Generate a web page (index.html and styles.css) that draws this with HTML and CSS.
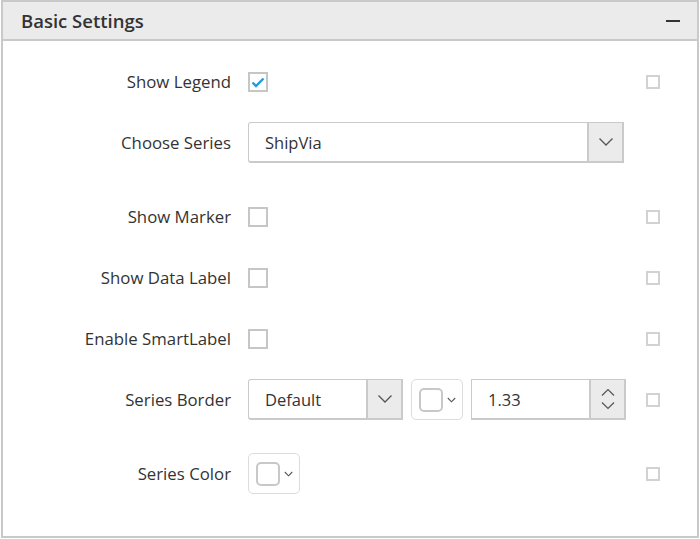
FILE: index.html
```html
<!DOCTYPE html>
<html lang="en">
<head>
<meta charset="utf-8">
<title>Basic Settings</title>
<link rel="stylesheet" href="styles.css">
</head>
<body>
<div class="panel">
  <div class="panel-header">
    <span class="panel-title">Basic Settings</span>
    <span class="collapse-icon"></span>
  </div>
  <div class="panel-body">
    <div class="row">
      <label class="row-label">Show Legend</label>
      <div class="row-control">
        <span class="checkbox checked">
          <svg width="16" height="16" viewBox="0 0 16 16"><polyline points="2.5,8.5 6,12 13.5,4.5" fill="none" stroke="#1f9de3" stroke-width="2.4"/></svg>
        </span>
      </div>
      <span class="side-check"></span>
    </div>

    <div class="row row-tall">
      <label class="row-label">Choose Series</label>
      <div class="row-control">
        <div class="dropdown dropdown-wide">
          <span class="dropdown-text">ShipVia</span>
          <span class="dropdown-btn">
            <svg width="16" height="10" viewBox="0 0 16 10"><polyline points="1.5,1.5 8,8 14.5,1.5" fill="none" stroke="#555" stroke-width="1.3"/></svg>
          </span>
        </div>
      </div>
      <span class="side-check hidden"></span>
    </div>

    <div class="row">
      <label class="row-label">Show Marker</label>
      <div class="row-control"><span class="checkbox"></span></div>
      <span class="side-check"></span>
    </div>

    <div class="row">
      <label class="row-label">Show Data Label</label>
      <div class="row-control"><span class="checkbox"></span></div>
      <span class="side-check"></span>
    </div>

    <div class="row">
      <label class="row-label">Enable SmartLabel</label>
      <div class="row-control"><span class="checkbox"></span></div>
      <span class="side-check"></span>
    </div>

    <div class="row row-tall">
      <label class="row-label">Series Border</label>
      <div class="row-control">
        <div class="dropdown dropdown-small">
          <span class="dropdown-text">Default</span>
          <span class="dropdown-btn">
            <svg width="16" height="10" viewBox="0 0 16 10"><polyline points="1.5,1.5 8,8 14.5,1.5" fill="none" stroke="#555" stroke-width="1.3"/></svg>
          </span>
        </div>
        <div class="color-picker">
          <span class="swatch"></span>
          <svg class="mini-chevron" width="9" height="6" viewBox="0 0 9 6"><polyline points="0.8,1 4.5,4.8 8.2,1" fill="none" stroke="#555" stroke-width="1.1"/></svg>
        </div>
        <div class="numeric">
          <span class="numeric-text">1.33</span>
          <span class="spin">
            <svg width="14" height="8" viewBox="0 0 14 8"><polyline points="1,7.5 7,1.5 13,7.5" fill="none" stroke="#555" stroke-width="1.2"/></svg>
            <svg width="14" height="8" viewBox="0 0 14 8"><polyline points="1,0.5 7,6.5 13,0.5" fill="none" stroke="#555" stroke-width="1.2"/></svg>
          </span>
        </div>
      </div>
      <span class="side-check"></span>
    </div>

    <div class="row">
      <label class="row-label">Series Color</label>
      <div class="row-control">
        <div class="color-picker">
          <span class="swatch"></span>
          <svg class="mini-chevron" width="9" height="6" viewBox="0 0 9 6"><polyline points="0.8,1 4.5,4.8 8.2,1" fill="none" stroke="#555" stroke-width="1.1"/></svg>
        </div>
      </div>
      <span class="side-check"></span>
    </div>
  </div>
</div>
</body>
</html>
```

FILE: styles.css
```css
* { box-sizing: border-box; }

html, body {
  margin: 0;
  padding: 0;
  background: #ffffff;
}

body {
  font-family: "Open Sans", "Noto Sans", "Liberation Sans", sans-serif;
  color: #333333;
}

.panel {
  margin-left: 1px;
  width: 698px;
  height: 538px;
  border: 2px solid #c9c9c9;
  background: #ffffff;
  display: flex;
  flex-direction: column;
}

.panel-header {
  height: 39px;
  flex: none;
  background: #ebebeb;
  border-bottom: 2px solid #c9c9c9;
  display: flex;
  align-items: center;
  justify-content: space-between;
  padding: 0 17px 0 18px;
}

.panel-title {
  font-size: 18.5px;
  font-weight: 600;
  color: #333333;
}

.collapse-icon {
  width: 14px;
  height: 2px;
  background: #333333;
  margin-top: 1px;
}

.panel-body {
  padding: 20px 37px 0 0;
  display: flex;
  flex-direction: column;
  gap: 20px;
}

.row {
  display: grid;
  grid-template-columns: 228px 1fr 14px;
  column-gap: 17px;
  align-items: center;
  height: 41px;
}

.row-tall {
  margin-bottom: 13px;
}

.row-label {
  text-align: right;
  font-size: 16.8px;
  color: #333333;
  white-space: nowrap;
}

.row-control {
  display: flex;
  align-items: center;
  gap: 8px;
}

.checkbox {
  width: 20px;
  height: 20px;
  border: 2px solid #c6c6c6;
  background: #ffffff;
  display: inline-flex;
  align-items: center;
  justify-content: center;
}

.side-check {
  width: 14px;
  height: 14px;
  border: 2px solid #d2d2d2;
}

.side-check.hidden {
  visibility: hidden;
}

.dropdown {
  height: 41px;
  border: 2px solid #cacaca;
  border-top-width: 1px;
  border-left-width: 1px;
  border-radius: 3px 0 0 3px;
  display: flex;
  align-items: stretch;
  background: #ffffff;
}

.dropdown-wide { width: 376px; }
.dropdown-small { width: 155px; }

.dropdown-text {
  flex: 1;
  display: flex;
  align-items: center;
  padding-left: 16px;
  font-size: 16.5px;
  color: #333333;
}

.dropdown-btn {
  width: 35px;
  background: #ebebeb;
  border-left: 2px solid #cacaca;
  display: flex;
  align-items: center;
  justify-content: center;
}

.color-picker {
  width: 52px;
  height: 41px;
  border: 1px solid #dcdcdc;
  border-radius: 5px;
  display: flex;
  align-items: center;
  padding-left: 7px;
  gap: 4px;
  background: #ffffff;
}

.swatch {
  width: 24px;
  height: 24px;
  border: 2px solid #c8c8c8;
  border-radius: 5px;
}

.mini-chevron { display: block; }

.numeric {
  width: 155px;
  height: 41px;
  border: 2px solid #cacaca;
  border-top-width: 1px;
  border-left-width: 1px;
  display: flex;
  align-items: stretch;
}

.numeric-text {
  flex: 1;
  display: flex;
  align-items: center;
  padding-left: 16px;
  font-size: 16.5px;
  color: #333333;
}

.spin {
  width: 35px;
  background: #ebebeb;
  border-left: 2px solid #cacaca;
  display: flex;
  flex-direction: column;
  align-items: center;
  justify-content: center;
  gap: 6px;
}

.spin svg { display: block; }
```
